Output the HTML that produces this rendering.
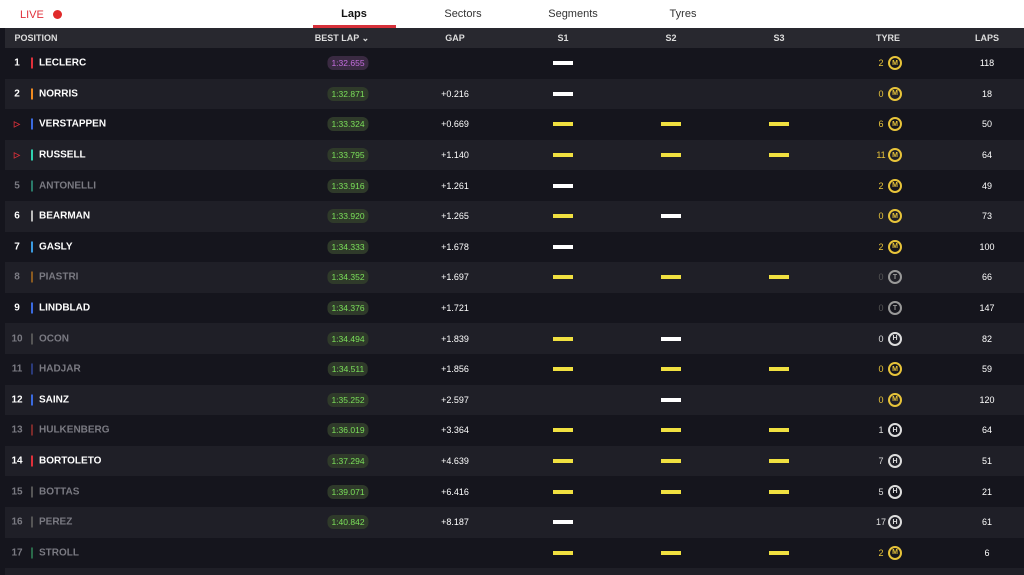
<!DOCTYPE html><html><head><style>
*{margin:0;padding:0;box-sizing:border-box}
html,body{width:1024px;height:575px;overflow:hidden}
body{background:#15151d;font-family:"Liberation Sans",sans-serif;position:relative}
i,b{font-style:normal}
.top{position:absolute;left:0;top:0;width:1024px;height:28px;background:#fff}
.live{position:absolute;left:20px;top:9px;font-size:11px;color:#e0303a}
.dot{position:absolute;left:53px;top:10px;width:9px;height:9px;border-radius:50%;background:#e02a2a}
.tab{position:absolute;top:8px;font-size:11px;color:#333;transform:translateX(-50%)}
.ul{position:absolute;left:313px;top:25px;width:83px;height:3px;background:#d6303a}
.hdr{position:absolute;left:5px;top:28px;width:1019px;height:20px;background:#28282f;color:#ddd;font-size:9px;font-weight:bold}
.hdr span{position:absolute;top:5px;transform:translateX(-50%)}
.row{position:absolute;left:5px;width:1019px;height:30.6px;font-size:10px;color:#fff;font-weight:bold}
.row.even{background:#15151d}
.row>*{position:absolute;top:50%;transform:translate(-50%,-50%)}
.n{left:12px}.bar{left:27px;width:2px;height:11px}
.nm{left:34px;transform:translate(0,-50%)!important}
.bl{left:343px;font-size:8.5px;font-weight:normal;color:#7be05a;background:#2f3a2a;border-radius:6px;padding:2px 4px}
.bl.p{color:#c66ee0;background:#3a2a42}
.gap{left:450px;font-weight:normal;font-size:9px}
.s{width:20px;height:4px}
.s1{left:558px}.s2{left:666px}.s3{left:774px}
.Y{background:#f0e040}.W{background:#fff}
.tn{left:876px;font-weight:normal;font-size:9px;color:#e8c43a}
.ty{left:890px;width:14px;height:14px;border-radius:50%;border:2px solid #e8c43a;color:#e8c43a;font-size:7px;font-weight:bold;display:flex;align-items:center;justify-content:center}
.H{border-color:#ddd;color:#ddd}.T{border-color:#999;color:#999}.tnW{color:#ddd}.tnD{color:#555}
.lp{left:982px;font-weight:normal;font-size:9px}
.d .n,.d .nm{color:#7a7a82}
.tri{color:#e0303a;font-size:8px}
</style></head><body>
<div class="top"></div>
<div class="live">LIVE</div><div class="dot"></div>
<div class="tab" style="left:354px;font-weight:bold;color:#111">Laps</div>
<div class="tab" style="left:463px">Sectors</div>
<div class="tab" style="left:573px">Segments</div>
<div class="tab" style="left:683px">Tyres</div>
<div class="ul"></div>
<div class="hdr"><span style="left:31px">POSITION</span><span style="left:337px">BEST LAP ⌄</span><span style="left:450px">GAP</span><span style="left:558px">S1</span><span style="left:666px">S2</span><span style="left:774px">S3</span><span style="left:883px">TYRE</span><span style="left:982px">LAPS</span></div>
<div class="row even" style="top:48px"><b class="n">1</b><i class="bar" style="background:#e0303a"></i><b class="nm">LECLERC</b><i class="bl p">1:32.655</i><i class="s s1 W"></i><i class="tn">2</i><i class="ty">M</i><i class="lp">118</i></div>
<div class="row" style="top:78.6px;background:#1f1f27"><b class="n">2</b><i class="bar" style="background:#f08a20"></i><b class="nm">NORRIS</b><i class="bl">1:32.871</i><i class="gap">+0.216</i><i class="s s1 W"></i><i class="tn">0</i><i class="ty">M</i><i class="lp">18</i></div>
<div class="row even" style="top:109.2px"><b class="n tri">▷</b><i class="bar" style="background:#3a6ae0"></i><b class="nm">VERSTAPPEN</b><i class="bl">1:33.324</i><i class="gap">+0.669</i><i class="s s1 Y"></i><i class="s s2 Y"></i><i class="s s3 Y"></i><i class="tn">6</i><i class="ty">M</i><i class="lp">50</i></div>
<div class="row" style="top:139.8px;background:#1f1f27"><b class="n tri">▷</b><i class="bar" style="background:#30d0b0"></i><b class="nm">RUSSELL</b><i class="bl">1:33.795</i><i class="gap">+1.140</i><i class="s s1 Y"></i><i class="s s2 Y"></i><i class="s s3 Y"></i><i class="tn">11</i><i class="ty">M</i><i class="lp">64</i></div>
<div class="row even d" style="top:170.4px"><b class="n">5</b><i class="bar" style="background:#2a7a6a"></i><b class="nm">ANTONELLI</b><i class="bl">1:33.916</i><i class="gap">+1.261</i><i class="s s1 W"></i><i class="tn">2</i><i class="ty">M</i><i class="lp">49</i></div>
<div class="row" style="top:201px;background:#1f1f27"><b class="n">6</b><i class="bar" style="background:#bbb"></i><b class="nm">BEARMAN</b><i class="bl">1:33.920</i><i class="gap">+1.265</i><i class="s s1 Y"></i><i class="s s2 W"></i><i class="tn">0</i><i class="ty">M</i><i class="lp">73</i></div>
<div class="row even" style="top:231.6px"><b class="n">7</b><i class="bar" style="background:#3a9ae0"></i><b class="nm">GASLY</b><i class="bl">1:34.333</i><i class="gap">+1.678</i><i class="s s1 W"></i><i class="tn">2</i><i class="ty">M</i><i class="lp">100</i></div>
<div class="row d" style="top:262.2px;background:#1f1f27"><b class="n">8</b><i class="bar" style="background:#8a5a20"></i><b class="nm">PIASTRI</b><i class="bl">1:34.352</i><i class="gap">+1.697</i><i class="s s1 Y"></i><i class="s s2 Y"></i><i class="s s3 Y"></i><i class="tn tnD">0</i><i class="ty T">T</i><i class="lp">66</i></div>
<div class="row even" style="top:292.8px"><b class="n">9</b><i class="bar" style="background:#3a6ae0"></i><b class="nm">LINDBLAD</b><i class="bl">1:34.376</i><i class="gap">+1.721</i><i class="tn tnD">0</i><i class="ty T">T</i><i class="lp">147</i></div>
<div class="row d" style="top:323.4px;background:#1f1f27"><b class="n">10</b><i class="bar" style="background:#555"></i><b class="nm">OCON</b><i class="bl">1:34.494</i><i class="gap">+1.839</i><i class="s s1 Y"></i><i class="s s2 W"></i><i class="tn tnW">0</i><i class="ty H">H</i><i class="lp">82</i></div>
<div class="row even d" style="top:354px"><b class="n">11</b><i class="bar" style="background:#2a3a7a"></i><b class="nm">HADJAR</b><i class="bl">1:34.511</i><i class="gap">+1.856</i><i class="s s1 Y"></i><i class="s s2 Y"></i><i class="s s3 Y"></i><i class="tn">0</i><i class="ty">M</i><i class="lp">59</i></div>
<div class="row" style="top:384.6px;background:#1f1f27"><b class="n">12</b><i class="bar" style="background:#3a6ae0"></i><b class="nm">SAINZ</b><i class="bl">1:35.252</i><i class="gap">+2.597</i><i class="s s2 W"></i><i class="tn">0</i><i class="ty">M</i><i class="lp">120</i></div>
<div class="row even d" style="top:415.2px"><b class="n">13</b><i class="bar" style="background:#7a2a2a"></i><b class="nm">HULKENBERG</b><i class="bl">1:36.019</i><i class="gap">+3.364</i><i class="s s1 Y"></i><i class="s s2 Y"></i><i class="s s3 Y"></i><i class="tn tnW">1</i><i class="ty H">H</i><i class="lp">64</i></div>
<div class="row" style="top:445.8px;background:#1f1f27"><b class="n">14</b><i class="bar" style="background:#e0303a"></i><b class="nm">BORTOLETO</b><i class="bl">1:37.294</i><i class="gap">+4.639</i><i class="s s1 Y"></i><i class="s s2 Y"></i><i class="s s3 Y"></i><i class="tn tnW">7</i><i class="ty H">H</i><i class="lp">51</i></div>
<div class="row even d" style="top:476.4px"><b class="n">15</b><i class="bar" style="background:#555"></i><b class="nm">BOTTAS</b><i class="bl">1:39.071</i><i class="gap">+6.416</i><i class="s s1 Y"></i><i class="s s2 Y"></i><i class="s s3 Y"></i><i class="tn tnW">5</i><i class="ty H">H</i><i class="lp">21</i></div>
<div class="row d" style="top:507px;background:#1f1f27"><b class="n">16</b><i class="bar" style="background:#555"></i><b class="nm">PEREZ</b><i class="bl">1:40.842</i><i class="gap">+8.187</i><i class="s s1 W"></i><i class="tn tnW">17</i><i class="ty H">H</i><i class="lp">61</i></div>
<div class="row even d" style="top:537.6px"><b class="n">17</b><i class="bar" style="background:#2a6a4a"></i><b class="nm">STROLL</b><i class="s s1 Y"></i><i class="s s2 Y"></i><i class="s s3 Y"></i><i class="tn">2</i><i class="ty">M</i><i class="lp">6</i></div>
<div class="row" style="top:568.2px;height:7px;background:#1f1f27"></div>
</body></html>
